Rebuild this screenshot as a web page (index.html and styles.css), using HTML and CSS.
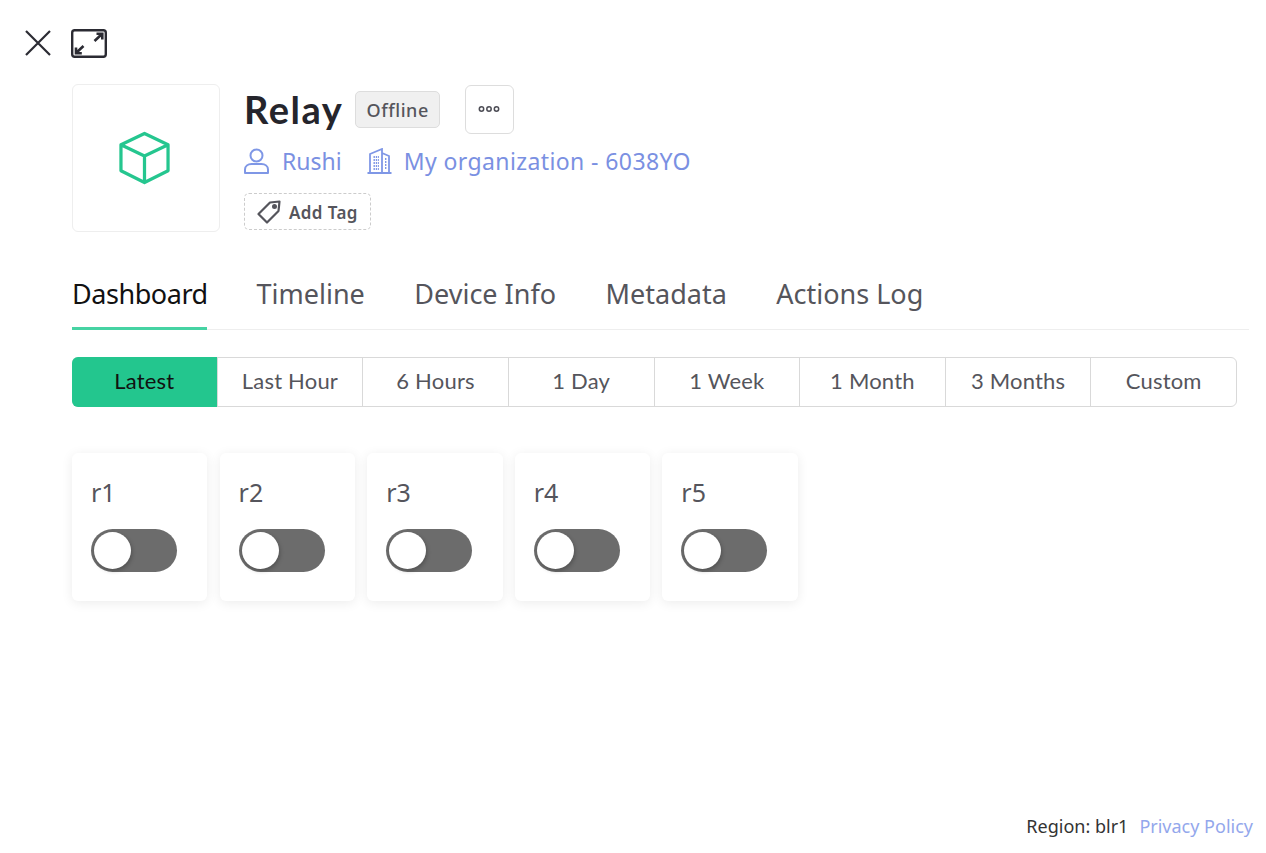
FILE: index.html
```html
<!DOCTYPE html>
<html lang="en">
<head>
    <meta charset="UTF-8">
    <title>Relay</title>
    <link rel="stylesheet" href="styles.css">
</head>
<body>
    <div class="toolbar">
        <svg class="icon-close" width="28" height="28" viewBox="0 0 28 28"><path d="M2 2L26 26M26 2L2 26" fill="none" stroke="#2b2b33" stroke-width="2.2"/></svg>
        <svg class="icon-expand" width="36" height="29" viewBox="0 0 36 29" fill="none" stroke="#2b2b33"><rect x="1.2" y="1.2" width="33.6" height="26.6" rx="2.5" stroke-width="2.4"/><path d="M23.5 12L31 5M25.5 4.7H31.3V10.5M12.5 17L5 24M5 18.5V24.3H10.8" stroke-width="2.6"/></svg>
    </div>

    <div class="device-header">
        <div class="logo-box">
            <svg width="51" height="54" viewBox="0 0 52 54" fill="none" stroke="#25c68f" stroke-width="3.3"><path d="M26 2L50 13.5V40L26 52L2 40V13.5Z M2 13.5L26 25L50 13.5 M26 25V52" stroke-linejoin="round"/></svg>
        </div>
        <div class="device-info">
            <div class="title-row">
                <h1>Relay</h1>
                <span class="status">Offline</span>
                <button class="more-btn"><svg width="22" height="8" viewBox="0 0 22 8" fill="none" stroke="#4d4d55" stroke-width="1.5"><circle cx="3.5" cy="4" r="2.2"/><circle cx="11" cy="4" r="2.2"/><circle cx="18.5" cy="4" r="2.2"/></svg></button>
            </div>
            <div class="owner-row">
                <svg class="owner-icon" width="25" height="26" viewBox="0 0 25 26" fill="none" stroke="#7f97e6" stroke-width="2"><circle cx="12.5" cy="7.5" r="6"/><path d="M1 25V21.5C1 18 4 16 7.5 16H17.5C21 16 24 18 24 21.5V25Z" stroke-linejoin="round"/></svg>
                <span class="owner-link">Rushi</span>
                <svg class="org-icon" width="25" height="26" viewBox="0 0 25 26" fill="none" stroke="#7f97e6" stroke-width="1.8"><path d="M0.5 25H24.5M3 25V6L15 1V25M15 5L22 8V25"/><path d="M6.5 9H12M6.5 12H12M6.5 15H12M6.5 18H12M6.5 21H12M18 11H20M18 14H20M18 17H20M18 20H20" stroke-width="1.9" stroke-dasharray="1.4 .9"/></svg>
                <span class="org-link">My organization - 6038YO</span>
            </div>
            <button class="add-tag">
                <svg width="24" height="24" viewBox="0 0 24 24" fill="none" stroke="#55555c" stroke-width="2.2"><path d="M1.5 14L13 2.5L22.5 1.5L21.5 11L10 22.5Z" stroke-linejoin="round"/><circle cx="17.5" cy="6.5" r="1.4" fill="#55555c"/></svg>
                <span class="add-tag-text">Add Tag</span>
            </button>
        </div>
    </div>

    <div class="tabs">
        <a class="tab active">Dashboard</a>
        <a class="tab">Timeline</a>
        <a class="tab">Device Info</a>
        <a class="tab">Metadata</a>
        <a class="tab">Actions Log</a>
    </div>

    <div class="range-group">
        <button class="range active">Latest</button>
        <button class="range">Last Hour</button>
        <button class="range">6 Hours</button>
        <button class="range">1 Day</button>
        <button class="range">1 Week</button>
        <button class="range">1 Month</button>
        <button class="range">3 Months</button>
        <button class="range">Custom</button>
    </div>

    <div class="widgets">
        <div class="widget"><div class="widget-name">r1</div><div class="switch"><span class="knob"></span></div></div>
        <div class="widget"><div class="widget-name">r2</div><div class="switch"><span class="knob"></span></div></div>
        <div class="widget"><div class="widget-name">r3</div><div class="switch"><span class="knob"></span></div></div>
        <div class="widget"><div class="widget-name">r4</div><div class="switch"><span class="knob"></span></div></div>
        <div class="widget"><div class="widget-name">r5</div><div class="switch"><span class="knob"></span></div></div>
    </div>

    <div class="footer">
        <span class="region">Region: blr1</span>
        <a class="privacy">Privacy Policy</a>
    </div>
</body>
</html>
```

FILE: styles.css
```css
* {
    box-sizing: border-box;
}

html, body {
    height: 853px;
    overflow: hidden;
}

body {
    margin: 0;
    padding: 0;
    position: relative;
    font-family: "Noto Sans", Arial, sans-serif;
    background-color: #fff;
    color: #55555c;
}

button {
    font-family: inherit;
    cursor: pointer;
}

.toolbar {
    display: flex;
    align-items: center;
    gap: 19px;
    height: 30px;
    margin: 28px 0 0 24px;
}

.device-header {
    display: flex;
    gap: 24px;
    margin: 26px 0 0 72px;
}

.logo-box {
    width: 148px;
    height: 148px;
    display: flex;
    align-items: center;
    justify-content: center;
    border: 1px solid #eeeeee;
    border-radius: 6px;
}

.logo-box svg {
    margin-right: 3px;
}

.title-row {
    display: flex;
    align-items: center;
    height: 50px;
}

h1 {
    margin: 0;
    font-family: Lato, sans-serif;
    font-size: 38px;
    font-weight: 700;
    letter-spacing: 1.5px;
    color: #25252c;
}

.status {
    margin-left: 12px;
    width: 85px;
    height: 37px;
    line-height: 37px;
    text-align: center;
    font-size: 18px;
    font-weight: 500;
    letter-spacing: 0.6px;
    background-color: #f0f0f0;
    border: 1px solid #dddddd;
    border-radius: 5px;
}

.more-btn {
    margin-left: 25px;
    width: 49px;
    height: 49px;
    padding: 0 2px 0 0;
    display: flex;
    align-items: center;
    justify-content: center;
    background: #fff;
    border: 1px solid #dddddd;
    border-radius: 6px;
}

.owner-row {
    display: flex;
    align-items: center;
    height: 28px;
    margin-top: 13px;
    font-size: 23px;
    color: #7a90e2;
}

.owner-link {
    margin-left: 13px;
    margin-right: 25px;
    white-space: nowrap;
}

.org-link {
    margin-left: 12px;
    letter-spacing: 0.4px;
    white-space: nowrap;
}

.add-tag {
    display: flex;
    align-items: center;
    gap: 8px;
    margin-top: 18px;
    width: 127px;
    height: 37px;
    padding: 0 0 0 12px;
    font-size: 17px;
    font-weight: 600;
    letter-spacing: 0.4px;
    color: #55555c;
    background: #fff;
    border: 1px dashed #cccccc;
    border-radius: 5px;
}

.add-tag-text {
    padding-top: 2px;
}

.tabs {
    display: flex;
    gap: 49.5px;
    height: 62px;
    margin: 36px 17px 0 72px;
    padding-top: 11px;
    font-size: 27px;
    border-bottom: 1px solid #eeeeee;
}

.tab {
    height: 51px;
    line-height: 30px;
    white-space: nowrap;
}

.tab.active {
    width: 135px;
    color: #111;
    letter-spacing: -0.45px;
    border-bottom: 3px solid #46d3a3;
}

.range-group {
    display: flex;
    width: 1165px;
    height: 50px;
    margin: 27px 0 0 72px;
    border: 1px solid #d9d9d9;
    border-radius: 6px;
}

.range {
    flex: 1;
    padding: 0 0 4px;
    font-family: Lato, sans-serif;
    font-size: 22px;
    letter-spacing: 0.2px;
    color: #55555c;
    background: none;
    border: none;
    border-left: 1px solid #d9d9d9;
}

.range.active {
    margin: -1px 0 -1px -1px;
    color: #111;
    background-color: #23c68e;
    border-left: none;
    border-radius: 6px 0 0 6px;
}

.widgets {
    display: flex;
    gap: 12.2px;
    margin: 46px 0 0 72px;
}

.widget {
    width: 135.4px;
    height: 148px;
    padding: 20px 19px;
    background: #fff;
    border-radius: 6px;
    box-shadow: 0 2px 12px rgba(0, 0, 0, 0.08);
}

.widget-name {
    font-size: 25px;
    line-height: 38px;
}

.switch {
    position: relative;
    width: 86px;
    height: 43px;
    margin-top: 18px;
    background-color: #6c6c6c;
    border-radius: 22px;
}

.knob {
    position: absolute;
    top: 3px;
    left: 3px;
    width: 37px;
    height: 37px;
    background: #fff;
    border-radius: 50%;
    box-shadow: 1px 2px 4px rgba(0, 0, 0, 0.25);
}

.footer {
    position: absolute;
    right: 13px;
    bottom: 15px;
    display: flex;
    gap: 11px;
    font-size: 18px;
}

.region {
    color: #333;
}

.privacy {
    color: #93a7ec;
}
```
